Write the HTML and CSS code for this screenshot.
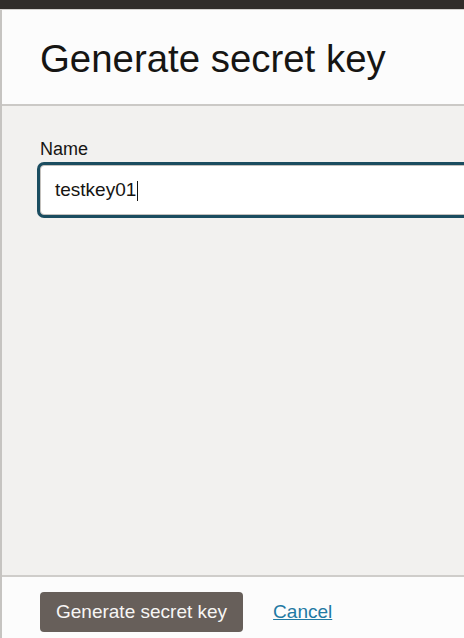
FILE: index.html
```html
<!DOCTYPE html>
<html lang="en">
<head>
<meta charset="utf-8">
<title>Generate secret key</title>
<link rel="stylesheet" href="styles.css">
</head>
<body>
<div class="page">
  <div class="topbar"></div>
  <div class="dialog">
    <header class="dialog-header">
      <h1 class="dialog-title">Generate secret key</h1>
    </header>
    <main class="dialog-body">
      <label class="field-label">Name</label>
      <div class="input-clip">
        <div class="text-input"><span class="input-value">testkey01</span><span class="caret"></span></div>
      </div>
    </main>
    <footer class="dialog-footer">
      <button class="btn-primary" type="button">Generate secret key</button>
      <a class="link-cancel" href="#">Cancel</a>
    </footer>
  </div>
</div>
</body>
</html>
```

FILE: styles.css
```css
html, body {
  margin: 0;
  padding: 0;
  overflow: hidden;
}
body {
  font-family: "Liberation Sans", Arial, sans-serif;
  color: #161513;
  background: #312d2a;
}
.page {
  display: flex;
  flex-direction: column;
  height: 638px;
  width: 464px;
  overflow: hidden;
}
.topbar {
  height: 9px;
  flex: none;
  background: #312d2a;
  border-bottom: 1px solid #d4d2cf;
}
.dialog {
  flex: 1;
  display: flex;
  flex-direction: column;
  border-left: 2px solid #c6c4c1;
  background: #f2f1ef;
  min-height: 0;
  overflow: hidden;
}
.dialog-header {
  flex: none;
  box-sizing: border-box;
  height: 96px;
  background: #fcfcfc;
  border-bottom: 2px solid #cbc9c6;
  padding: 27px 0 0 38px;
}
.dialog-title {
  margin: 0;
  font-size: 38.4px;
  font-weight: normal;
  line-height: 44px;
  color: #161513;
  white-space: nowrap;
}
.dialog-body {
  flex: 1;
  display: flex;
  flex-direction: column;
  align-items: stretch;
  padding: 33px 0 0 35px;
  background: #f2f1ef;
}
.field-label {
  font-size: 18px;
  line-height: 21px;
  color: #161513;
  margin: 0 0 2px 3px;
}
.input-clip {
  padding: 3px 0 3px 3px;
  overflow: hidden;
}
.text-input {
  box-sizing: border-box;
  width: 470px;
  height: 50px;
  display: flex;
  align-items: center;
  padding-left: 14px;
  background: #ffffff;
  border: 1px solid #c4c1bd;
  border-radius: 4px;
  box-shadow: 0 0 0 3px #1b4d60;
  font-size: 19px;
  color: #161513;
}
.caret {
  display: inline-block;
  width: 1px;
  height: 20px;
  margin-left: 1px;
  margin-top: 2px;
  background: #161513;
}
.dialog-footer {
  flex: none;
  box-sizing: border-box;
  height: 63px;
  background: #fcfcfc;
  border-top: 2px solid #cfcdca;
  display: flex;
  align-items: flex-start;
  padding: 15px 0 0 38px;
  gap: 30px;
}
.btn-primary {
  height: 40px;
  padding: 0 16px;
  border: none;
  border-radius: 4px;
  background: #675f5a;
  color: #f7f6f5;
  font-family: "Liberation Sans", Arial, sans-serif;
  font-size: 19px;
  line-height: 40px;
  white-space: nowrap;
}
.link-cancel {
  font-size: 19px;
  line-height: 40px;
  color: #1f79a3;
  text-decoration: underline;
}
```
